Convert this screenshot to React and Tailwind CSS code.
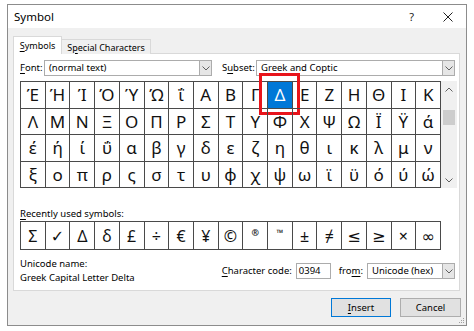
import React from 'react';

const rows = [
  ['Έ', 'Ή', 'Ί', 'Ό', 'Ύ', 'Ώ', 'ΐ', 'Α', 'Β', 'Γ', 'Δ', 'Ε', 'Ζ', 'Η', 'Θ', 'Ι', 'Κ'],
  ['Λ', 'Μ', 'Ν', 'Ξ', 'Ο', 'Π', 'Ρ', 'Σ', 'Τ', 'Υ', 'Φ', 'Χ', 'Ψ', 'Ω', 'Ϊ', 'Ϋ', 'ά'],
  ['έ', 'ή', 'ί', 'ΰ', 'α', 'β', 'γ', 'δ', 'ε', 'ζ', 'η', 'θ', 'ι', 'κ', 'λ', 'μ', 'ν'],
  ['ξ', 'ο', 'π', 'ρ', 'ς', 'σ', 'τ', 'υ', 'φ', 'χ', 'ψ', 'ω', 'ϊ', 'ϋ', 'ό', 'ύ', 'ώ'],
];

const recent = ['Σ', '✓', 'Δ', 'δ', '£', '÷', '€', '¥', '©', '®', '™', '±', '≠', '≤', '≥', '×', '∞'];

const Chevron = ({ up }) => (
  <svg width="8" height="5" viewBox="0 0 8 5" className="block">
    <path
      d={up ? 'M0.5 4.5 L4 1 L7.5 4.5' : 'M0.5 0.5 L4 4 L7.5 0.5'}
      fill="none"
      stroke="#606060"
      strokeWidth="1"
    />
  </svg>
);

// combo box with the little grey arrow button
const Combo = ({ text, className }) => (
  <div className={`h-[16px] bg-white border border-[#acacac] flex items-center ${className}`}>
    <span className="flex-1 pl-[4px] text-[9.5px] leading-[14px] text-black whitespace-nowrap">{text}</span>
    <div className="w-[12px] h-full bg-[#e6e6e6] border-l border-[#acacac] flex items-center justify-center">
      <Chevron />
    </div>
  </div>
);

const U = ({ children }) => <span className="underline underline-offset-[1.5px]">{children}</span>;

export default function App() {
  return (
    <div className="w-[474px] h-[331px] bg-white pt-[4px] pl-[7px] font-['Noto_Sans','DejaVu_Sans',sans-serif] text-black">
      <div className="w-[460px] h-[322px] border border-[#8c8c8c] flex flex-col">
        {/* title bar */}
        <div className="h-[23px] bg-white flex items-center pl-[6px] shrink-0">
          <span className="text-[11.5px] leading-none">Symbol</span>
          <span className="ml-auto text-[11px] leading-none text-[#222] mr-[29px]">?</span>
          <svg width="10" height="10" viewBox="0 0 10 10" className="mr-[13px]">
            <path d="M0.5 0.5 L9.5 9.5 M9.5 0.5 L0.5 9.5" stroke="#222" strokeWidth="1" />
          </svg>
        </div>

        {/* body */}
        <div className="flex-1 bg-[#f0f0f0] flex flex-col pl-[5px] pr-[5px] pt-[8px] relative">
          {/* tabs */}
          <div className="flex items-end h-[18px] -mb-px relative z-10">
            <div className="w-[49px] h-[18px] bg-white border border-b-0 border-[#d9d9d9] flex items-center justify-center text-[9px] leading-none">
              <span><U>S</U>ymbols</span>
            </div>
            <div className="w-[89px] h-[15px] bg-[#f0f0f0] border border-l-0 border-b-0 border-[#d9d9d9] flex items-center justify-center text-[9px] leading-none">
              <span>S<U>p</U>ecial Characters</span>
            </div>
          </div>

          {/* panel */}
          <div className="w-[447px] h-[238px] bg-white border border-[#d9d9d9] flex flex-col pl-[6px]">
            {/* font / subset row */}
            <div className="flex items-center mt-[6px] h-[16px]">
              <span className="text-[9.5px] leading-none w-[24px]"><U>F</U>ont:</span>
              <Combo text="(normal text)" className="w-[168px]" />
              <span className="text-[9.5px] leading-none ml-[10px] w-[34px]">S<U>u</U>bset:</span>
              <Combo text="Greek and Coptic" className="w-[199px]" />
            </div>

            {/* character grid + scrollbar */}
            <div className="flex mt-[5px]">
              <div className="w-[421px] h-[107px] grid grid-cols-[repeat(17,1fr)] grid-rows-4 border-l border-t border-[#4a4a4a]">
                {rows.flat().map((ch, i) => {
                  const sel = ch === 'Δ';
                  return (
                    <div
                      key={i}
                      className={`relative border-r border-b border-[#4a4a4a] flex items-center justify-center text-[17px] leading-none ${
                        sel ? 'bg-[#0078d7] text-white' : 'text-[#111]'
                      }`}
                    >
                      {ch}
                      {sel && (
                        <div className="absolute -left-[9px] -top-[9px] -right-[8px] -bottom-[7px] border-[3px] border-[#e8141b]" />
                      )}
                    </div>
                  );
                })}
              </div>
              <div className="w-[16px] h-[107px] bg-[#f0f0f0] flex flex-col items-center">
                <div className="h-[16px] flex items-center justify-center">
                  <Chevron up />
                </div>
                <div className="w-[12px] h-[15px] bg-[#cdcdcd] mt-[13px]" />
                <div className="mt-auto h-[16px] flex items-center justify-center">
                  <Chevron />
                </div>
              </div>
            </div>

            {/* recently used */}
            <div className="mt-[19px] text-[9.5px] leading-[13px]"><U>R</U>ecently used symbols:</div>
            <div className="w-[421px] h-[29px] grid grid-cols-[repeat(17,1fr)] border-l border-t border-[#4a4a4a] mt-[1px]">
              {recent.map((ch, i) => {
                const small = ch === '®' || ch === '™';
                return (
                  <div
                    key={i}
                    className={`border-r border-b border-[#4a4a4a] flex justify-center leading-none text-[#111] ${
                      small ? 'items-start pt-[6px] text-[9px] font-bold' : 'items-center text-[16px]'
                    }`}
                  >
                    {ch}
                  </div>
                );
              })}
            </div>

            {/* unicode name / character code */}
            <div className="flex items-center mt-[7px]">
              <div className="flex flex-col text-[9.5px] leading-[14px]">
                <span>Unicode name:</span>
                <span>Greek Capital Letter Delta</span>
              </div>
              <div className="ml-auto flex items-center mr-[4px]">
                <span className="text-[9.5px] leading-none mr-[4px]"><U>C</U>haracter code:</span>
                <div className="w-[35px] h-[16px] bg-white border border-[#acacac] flex items-center pl-[2px] text-[9.5px] leading-[14px]">
                  0394
                </div>
                <span className="text-[9.5px] leading-none ml-[8px] mr-[4px]">fro<U>m</U>:</span>
                <Combo text="Unicode (hex)" className="w-[88px]" />
              </div>
            </div>
          </div>

          {/* buttons */}
          <div className="flex justify-end gap-[9px] mt-[7px]">
            <button className="w-[60px] h-[19px] bg-[#e1e1e1] border border-[#0078d7] text-[9.5px] leading-none">
              <U>I</U>nsert
            </button>
            <button className="w-[61px] h-[19px] bg-[#e1e1e1] border border-[#adadad] text-[9.5px] leading-none">
              Cancel
            </button>
          </div>

          {/* size grip */}
          <svg width="8" height="8" viewBox="0 0 8 8" className="absolute right-[1px] bottom-[1px]">
            <rect x="6" y="2" width="1" height="1" fill="#a0a0a0" />
            <rect x="4" y="4" width="1" height="1" fill="#a0a0a0" />
            <rect x="6" y="4" width="1" height="1" fill="#a0a0a0" />
            <rect x="2" y="6" width="1" height="1" fill="#a0a0a0" />
            <rect x="4" y="6" width="1" height="1" fill="#a0a0a0" />
            <rect x="6" y="6" width="1" height="1" fill="#a0a0a0" />
          </svg>
        </div>
      </div>
    </div>
  );
}
